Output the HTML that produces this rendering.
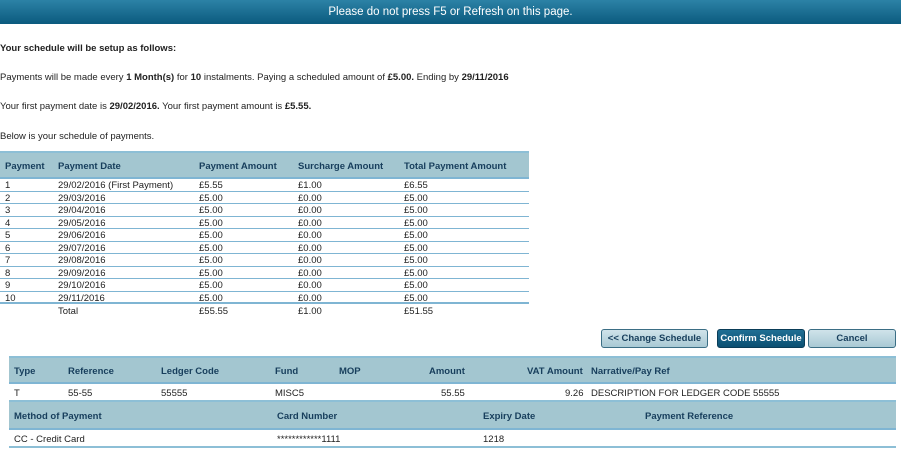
<!DOCTYPE html><html><head><style>
*{margin:0;padding:0;box-sizing:border-box}
body{width:901px;height:464px;background:#fff;font-family:"Liberation Sans",sans-serif;font-size:9.5px;color:#222;position:relative;overflow:hidden}
.bar{position:absolute;left:0;top:0;width:901px;height:24px;background:linear-gradient(#2c82a6,#0b5a7e);color:#fff;font-size:11.5px;text-align:center;line-height:24px}
.a{position:absolute;white-space:nowrap}
.hd{position:absolute;background:#a3c6d0;border-top:2px solid #8dbfd6;border-bottom:2px solid #7fb5d3}
.hd span,.r span{position:absolute;font-weight:bold;color:#173e5c}
.r span{font-weight:normal;color:#222}
.r{position:absolute;border-bottom:1px solid #7fb5d3}
.btn{position:absolute;height:19px;border:1px solid #3b6e85;border-radius:3px;background:linear-gradient(#cfe3ea,#a9c9d4);color:#173e5c;font-weight:bold;text-align:center;line-height:17px;font-size:9.5px}
</style></head><body>
<div class="bar">Please do not press F5 or Refresh on this page.</div>
<div class="a" style="left:0;top:43px;font-weight:bold">Your schedule will be setup as follows:</div>
<div class="a" style="left:0;top:72px">Payments will be made every <b>1 Month(s)</b> for <b>10</b> instalments. Paying a scheduled amount of <b>£5.00.</b> Ending by <b>29/11/2016</b></div>
<div class="a" style="left:0;top:101px">Your first payment date is <b>29/02/2016.</b> Your first payment amount is <b>£5.55.</b></div>
<div class="a" style="left:0;top:131px">Below is your schedule of payments.</div>
<div class="hd" style="left:0;top:151px;width:529px;height:28px"><span style="left:5px;top:8px">Payment</span><span style="left:58px;top:8px">Payment Date</span><span style="left:199px;top:8px">Payment Amount</span><span style="left:298px;top:8px">Surcharge Amount</span><span style="left:404px;top:8px">Total Payment Amount</span></div>
<div id="rows"></div>
<script>
var d=[["1","29/02/2016 (First Payment)","£5.55","£1.00","£6.55"],["2","29/03/2016","£5.00","£0.00","£5.00"],["3","29/04/2016","£5.00","£0.00","£5.00"],["4","29/05/2016","£5.00","£0.00","£5.00"],["5","29/06/2016","£5.00","£0.00","£5.00"],["6","29/07/2016","£5.00","£0.00","£5.00"],["7","29/08/2016","£5.00","£0.00","£5.00"],["8","29/09/2016","£5.00","£0.00","£5.00"],["9","29/10/2016","£5.00","£0.00","£5.00"],["10","29/11/2016","£5.00","£0.00","£5.00"]];
var x=[5,58,199,298,404],h="";
d.forEach(function(r,i){h+='<div class="r" style="left:0;top:'+(179+i*12.5)+'px;width:529px;height:12.5px'+(i==9?';border-bottom-width:2px':'')+'">';r.forEach(function(c,j){h+='<span style="left:'+x[j]+'px;top:1px">'+c+'</span>'});h+='</div>'});
document.getElementById('rows').innerHTML=h;
</script>
<div class="a" style="left:58px;top:306px">Total</div><div class="a" style="left:199px;top:306px">£55.55</div><div class="a" style="left:298px;top:306px">£1.00</div><div class="a" style="left:404px;top:306px">£51.55</div>
<div class="btn" style="left:601px;top:329px;width:107px">&lt;&lt; Change Schedule</div>
<div class="btn" style="left:717px;top:329px;width:88px;background:linear-gradient(#1f6f94,#0b4f72);color:#fff;border-color:#0a3d58">Confirm Schedule</div>
<div class="btn" style="left:808px;top:329px;width:88px">Cancel</div>
<div class="hd" style="left:9px;top:356px;width:887px;height:28px"><span style="left:5px;top:8px">Type</span><span style="left:59px;top:8px">Reference</span><span style="left:152px;top:8px">Ledger Code</span><span style="left:266px;top:8px">Fund</span><span style="left:330px;top:8px">MOP</span><span style="left:420px;top:8px">Amount</span><span style="left:518px;top:8px">VAT Amount</span><span style="left:582px;top:8px">Narrative/Pay Ref</span></div>
<div class="r" style="left:9px;top:384px;width:887px;height:17px;border:none"><span style="left:5px;top:4px">T</span><span style="left:59px;top:4px">55-55</span><span style="left:152px;top:4px">55555</span><span style="left:266px;top:4px">MISC5</span><span style="left:432px;top:4px">55.55</span><span style="left:556px;top:4px">9.26</span><span style="left:582px;top:4px">DESCRIPTION FOR LEDGER CODE 55555</span></div>
<div class="hd" style="left:9px;top:400px;width:887px;height:30px"><span style="left:5px;top:9px">Method of Payment</span><span style="left:268px;top:9px">Card Number</span><span style="left:474px;top:9px">Expiry Date</span><span style="left:636px;top:9px">Payment Reference</span></div>
<div class="r" style="left:9px;top:430px;width:887px;height:18px;border-bottom:2px solid #8dbfd6"><span style="left:5px;top:4px">CC - Credit Card</span><span style="left:268px;top:4px">************1111</span><span style="left:474px;top:4px">1218</span></div>
</body></html>
